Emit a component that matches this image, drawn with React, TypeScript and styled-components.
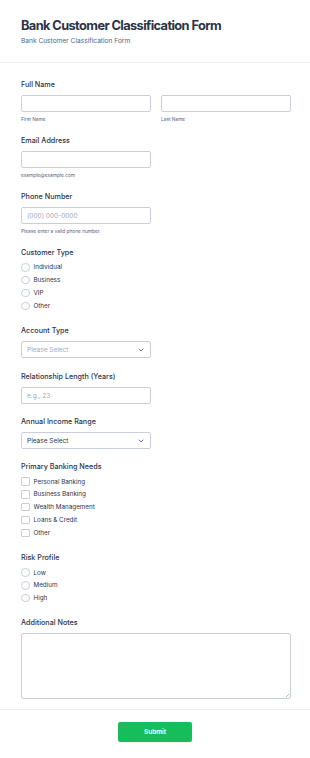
import React from "react";
import styled, { createGlobalStyle } from "styled-components";

const INK = "#2c3345";
const MUTED = "#57647e";
const BORDER = "#c8cedb";
const PLACEHOLDER = "#a0a8b8";

const GlobalStyle = createGlobalStyle`
  * { box-sizing: border-box; }
  body {
    margin: 0;
    background: #fff;
    font-family: Inter, "Noto Sans", sans-serif;
    color: ${INK};
  }
`;

const customerTypes = ["Individual", "Business", "VIP", "Other"];
const bankingNeeds = [
  "Personal Banking",
  "Business Banking",
  "Wealth Management",
  "Loans & Credit",
  "Other",
];
const riskLevels = ["Low", "Medium", "High"];

const Chevron = () => (
  <svg width="6" height="4" viewBox="0 0 6 4" fill="none">
    <path d="M1 1l2 2 2-2" stroke="#57647e" strokeWidth="0.9" strokeLinecap="round" strokeLinejoin="round" />
  </svg>
);

const App = function App() {
  return (
    <Page>
      <GlobalStyle />
      <Header>
        <Title>Bank Customer Classification Form</Title>
        <Subtitle>Bank Customer Classification Form</Subtitle>
      </Header>
      <Body>
        <Field>
          <Label>Full Name</Label>
          <Split>
            <Column>
              <Input />
              <Sublabel>First Name</Sublabel>
            </Column>
            <Column>
              <Input />
              <Sublabel>Last Name</Sublabel>
            </Column>
          </Split>
        </Field>

        <Field>
          <Label>Email Address</Label>
          <HalfColumn>
            <Input />
            <Sublabel>example@example.com</Sublabel>
          </HalfColumn>
        </Field>

        <Field>
          <Label>Phone Number</Label>
          <HalfColumn>
            <Input placeholder="(000) 000-0000" />
            <Sublabel>Please enter a valid phone number.</Sublabel>
          </HalfColumn>
        </Field>

        <Field $gap={14}>
          <OptionLabel>Customer Type</OptionLabel>
          {customerTypes.map((t) => (
            <Option key={t}>
              <Radio />
              {t}
            </Option>
          ))}
        </Field>

        <Field $gap={14}>
          <Label>Account Type</Label>
          <Select $muted>
            Please Select
            <Chevron />
          </Select>
        </Field>

        <Field>
          <Label>Relationship Length (Years)</Label>
          <HalfColumn>
            <Input placeholder="e.g., 23" />
          </HalfColumn>
        </Field>

        <Field>
          <Label>Annual Income Range</Label>
          <Select>
            Please Select
            <Chevron />
          </Select>
        </Field>

        <Field $gap={14}>
          <OptionLabel>Primary Banking Needs</OptionLabel>
          {bankingNeeds.map((n) => (
            <Option key={n}>
              <Checkbox />
              {n}
            </Option>
          ))}
        </Field>

        <Field $gap={13}>
          <OptionLabel>Risk Profile</OptionLabel>
          {riskLevels.map((r) => (
            <Option key={r}>
              <Radio />
              {r}
            </Option>
          ))}
        </Field>

        <Field $gap={10}>
          <Label>Additional Notes</Label>
          <TextArea />
        </Field>
      </Body>
      <Footer>
        <SubmitButton>Submit</SubmitButton>
      </Footer>
    </Page>
  );
};
export default App;

const Page = styled.div`
  width: 310px;
  min-height: 758px;
  background: #fff;
`;

const Header = styled.div`
  padding: 17px 19px 16px 21px;
  border-bottom: 1px solid #eceef3;
`;

const Title = styled.h1`
  margin: 0;
  font-size: 12.8px;
  line-height: 18px;
  font-weight: 700;
  letter-spacing: -0.6px;
  color: ${INK};
`;

const Subtitle = styled.p`
  margin: 1px 0 0;
  font-size: 6.6px;
  line-height: 10px;
  color: ${MUTED};
`;

const Body = styled.div`
  padding: 17px 19px 0 21px;
`;

const Field = styled.div<{ $gap?: number }>`
  padding-bottom: ${(p) => p.$gap ?? 13}px;
`;

const Label = styled.div`
  font-size: 7.2px;
  line-height: 10px;
  font-weight: 500;
  color: ${INK};
  margin-bottom: 5px;
`;

const OptionLabel = styled(Label)`
  margin-bottom: 3px;
`;

const Split = styled.div`
  display: grid;
  grid-template-columns: 1fr 1fr;
  column-gap: 10px;
`;

const Column = styled.div`
  display: flex;
  flex-direction: column;
`;

const HalfColumn = styled(Column)`
  width: 130px;
`;

const Input = styled.input`
  width: 100%;
  height: 17px;
  margin: 0;
  padding: 0 5px;
  border: 1px solid ${BORDER};
  border-radius: 2px;
  font-family: inherit;
  font-size: 6.5px;
  color: ${INK};
  background: #fff;
  &::placeholder {
    color: ${PLACEHOLDER};
  }
`;

const Sublabel = styled.div`
  margin-top: 4px;
  font-size: 4.8px;
  line-height: 7px;
  color: ${MUTED};
`;

const Select = styled.div<{ $muted?: boolean }>`
  width: 130px;
  height: 17px;
  padding: 0 6px 0 5px;
  display: flex;
  align-items: center;
  justify-content: space-between;
  border: 1px solid ${BORDER};
  border-radius: 2px;
  font-size: 6.5px;
  color: ${(p) => (p.$muted ? PLACEHOLDER : INK)};
`;

const Option = styled.div`
  display: flex;
  align-items: center;
  gap: 4px;
  height: 12.8px;
  font-size: 6.3px;
  color: ${INK};
`;

const Radio = styled.span`
  width: 8.5px;
  height: 8.5px;
  border-radius: 50%;
  border: 1px solid ${BORDER};
  flex-shrink: 0;
`;

const Checkbox = styled.span`
  width: 8.5px;
  height: 8.5px;
  border-radius: 1px;
  border: 1px solid ${BORDER};
  flex-shrink: 0;
`;

const TextArea = styled.div`
  position: relative;
  width: 100%;
  height: 66px;
  border: 1px solid ${BORDER};
  border-radius: 2px;
  &:after {
    content: "";
    position: absolute;
    right: 1px;
    bottom: 1px;
    width: 3px;
    height: 3px;
    background: linear-gradient(135deg, transparent 45%, #b5bcc9 45%, #b5bcc9 55%, transparent 55%);
  }
`;

const Footer = styled.div`
  border-top: 1px solid #eceef3;
  padding: 12px 0 16px;
  display: flex;
  justify-content: center;
`;

const SubmitButton = styled.button`
  width: 74px;
  height: 20px;
  border: none;
  border-radius: 2px;
  background: #18bd5b;
  color: #fff;
  font-family: inherit;
  font-size: 6.5px;
  font-weight: 600;
  cursor: pointer;
`;
